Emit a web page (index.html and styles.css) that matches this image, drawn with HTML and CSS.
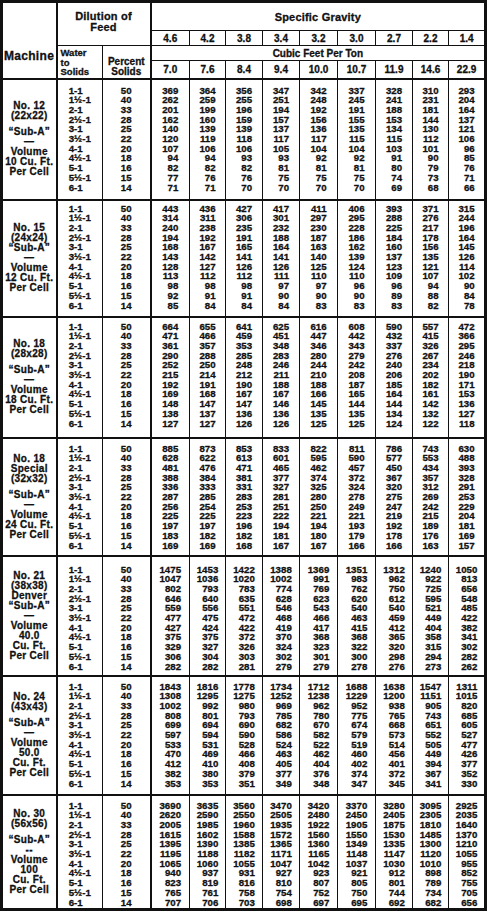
FILE: index.html
```html
<!DOCTYPE html>
<html lang="en">
<head>
<meta charset="utf-8">
<title>Sub-A Cell Capacity Table</title>
<link rel="stylesheet" href="styles.css">
</head>
<body>
<table class="t">
<colgroup>
<col class="c-m"><col class="c-w"><col class="c-p">
<col class="c1"><col class="c2"><col class="c3"><col class="c4"><col class="c5"><col class="c6"><col class="c7"><col class="c8"><col class="c9">
</colgroup>
<thead>
<tr class="h1">
<th rowspan="4" class="mach">Machine</th>
<th colspan="2" rowspan="2" class="dil">Dilution of<br>Feed</th>
<th colspan="9" class="sg">Specific Gravity</th>
</tr>
<tr class="h2">
<th class="n">4.6</th><th class="n">4.2</th><th class="n">3.8</th><th class="n">3.4</th><th class="n">3.2</th><th class="n">3.0</th><th class="n">2.7</th><th class="n">2.2</th><th class="n">1.4</th>
</tr>
<tr class="h3">
<th rowspan="2" class="wts">Water<br>to<br>Solids</th>
<th rowspan="2" class="ps">Percent<br>Solids</th>
<th colspan="9" class="cf">Cubic Feet Per Ton</th>
</tr>
<tr class="h4">
<th class="n">7.0</th><th class="n">7.6</th><th class="n">8.4</th><th class="n">9.4</th><th class="n">10.0</th><th class="n">10.7</th><th class="n">11.9</th><th class="n">14.6</th><th class="n">22.9</th>
</tr>
</thead>
<tbody>
<tr class="sec s1">
<td class="m"><div>No. 12</div><div>(22x22)</div><div class="gap">“Sub-A”</div><div>—</div><div>Volume</div><div>10 Cu. Ft.</div><div>Per Cell</div></td>
<td class="w d"><div class="st">1-1<br>1½-1<br>2-1<br>2½-1<br>3-1<br>3½-1<br>4-1<br>4½-1<br>5-1<br>5½-1<br>6-1</div></td>
<td class="p d"><div class="st">50<br>40<br>33<br>28<br>25<br>22<br>20<br>18<br>16<br>15<br>14</div></td>
<td class="v d"><div class="st">369<br>262<br>201<br>162<br>140<br>120<br>107<br>94<br>82<br>77<br>71</div></td>
<td class="v d"><div class="st">364<br>259<br>199<br>160<br>139<br>119<br>106<br>94<br>82<br>76<br>71</div></td>
<td class="v d"><div class="st">356<br>255<br>196<br>159<br>139<br>118<br>106<br>93<br>82<br>76<br>70</div></td>
<td class="v d"><div class="st">347<br>251<br>194<br>157<br>137<br>117<br>105<br>93<br>81<br>75<br>70</div></td>
<td class="v d"><div class="st">342<br>248<br>192<br>156<br>136<br>117<br>104<br>92<br>81<br>75<br>70</div></td>
<td class="v d"><div class="st">337<br>245<br>191<br>155<br>135<br>115<br>104<br>92<br>81<br>75<br>70</div></td>
<td class="v d"><div class="st">328<br>241<br>188<br>153<br>134<br>115<br>103<br>91<br>80<br>74<br>69</div></td>
<td class="v d"><div class="st">310<br>231<br>181<br>144<br>130<br>112<br>101<br>90<br>79<br>73<br>68</div></td>
<td class="v d"><div class="st">293<br>204<br>164<br>137<br>121<br>106<br>96<br>85<br>76<br>71<br>66</div></td>
</tr>
<tr class="sec s2">
<td class="m"><div>No. 15</div><div>(24x24)</div><div>“Sub-A”</div><div>—</div><div>Volume</div><div>12 Cu. Ft.</div><div>Per Cell</div></td>
<td class="w d"><div class="st">1-1<br>1½-1<br>2-1<br>2½-1<br>3-1<br>3½-1<br>4-1<br>4½-1<br>5-1<br>5½-1<br>6-1</div></td>
<td class="p d"><div class="st">50<br>40<br>33<br>28<br>25<br>22<br>20<br>18<br>16<br>15<br>14</div></td>
<td class="v d"><div class="st">443<br>314<br>240<br>194<br>168<br>143<br>128<br>113<br>98<br>92<br>85</div></td>
<td class="v d"><div class="st">436<br>311<br>238<br>192<br>167<br>142<br>127<br>112<br>98<br>91<br>84</div></td>
<td class="v d"><div class="st">427<br>306<br>235<br>191<br>165<br>141<br>126<br>112<br>98<br>91<br>84</div></td>
<td class="v d"><div class="st">417<br>301<br>232<br>188<br>164<br>141<br>126<br>111<br>97<br>90<br>84</div></td>
<td class="v d"><div class="st">411<br>297<br>230<br>187<br>163<br>140<br>125<br>110<br>97<br>90<br>83</div></td>
<td class="v d"><div class="st">406<br>295<br>228<br>186<br>162<br>139<br>124<br>110<br>96<br>90<br>83</div></td>
<td class="v d"><div class="st">393<br>288<br>225<br>184<br>160<br>137<br>123<br>109<br>96<br>89<br>83</div></td>
<td class="v d"><div class="st">371<br>276<br>217<br>178<br>156<br>135<br>121<br>107<br>94<br>88<br>82</div></td>
<td class="v d"><div class="st">315<br>244<br>196<br>164<br>145<br>126<br>114<br>102<br>90<br>84<br>78</div></td>
</tr>
<tr class="sec s3">
<td class="m"><div>No. 18</div><div>(28x28)</div><div class="gap">“Sub-A”</div><div>—</div><div>Volume</div><div>18 Cu. Ft.</div><div>Per Cell</div></td>
<td class="w d"><div class="st">1-1<br>1½-1<br>2-1<br>2½-1<br>3-1<br>3½-1<br>4-1<br>4½-1<br>5-1<br>5½-1<br>6-1</div></td>
<td class="p d"><div class="st">50<br>40<br>33<br>28<br>25<br>22<br>20<br>18<br>16<br>15<br>14</div></td>
<td class="v d"><div class="st">664<br>471<br>361<br>290<br>252<br>215<br>192<br>169<br>148<br>138<br>127</div></td>
<td class="v d"><div class="st">655<br>466<br>357<br>288<br>250<br>214<br>191<br>168<br>147<br>137<br>127</div></td>
<td class="v d"><div class="st">641<br>459<br>353<br>285<br>248<br>212<br>190<br>167<br>147<br>136<br>126</div></td>
<td class="v d"><div class="st">625<br>451<br>348<br>283<br>246<br>211<br>188<br>167<br>146<br>136<br>126</div></td>
<td class="v d"><div class="st">616<br>447<br>346<br>280<br>244<br>210<br>188<br>166<br>145<br>135<br>125</div></td>
<td class="v d"><div class="st">608<br>442<br>343<br>279<br>242<br>208<br>187<br>165<br>144<br>135<br>125</div></td>
<td class="v d"><div class="st">590<br>432<br>337<br>276<br>240<br>206<br>185<br>164<br>144<br>134<br>124</div></td>
<td class="v d"><div class="st">557<br>415<br>326<br>267<br>234<br>202<br>182<br>161<br>142<br>132<br>122</div></td>
<td class="v d"><div class="st">472<br>366<br>295<br>246<br>218<br>190<br>171<br>153<br>136<br>127<br>118</div></td>
</tr>
<tr class="sec s4">
<td class="m"><div>No. 18</div><div>Special</div><div>(32x32)</div><div class="gap">“Sub-A”</div><div>—</div><div>Volume</div><div>24 Cu. Ft.</div><div>Per Cell</div></td>
<td class="w d"><div class="st">1-1<br>1½-1<br>2-1<br>2½-1<br>3-1<br>3½-1<br>4-1<br>4½-1<br>5-1<br>5½-1<br>6-1</div></td>
<td class="p d"><div class="st">50<br>40<br>33<br>28<br>25<br>22<br>20<br>18<br>16<br>15<br>14</div></td>
<td class="v d"><div class="st">885<br>628<br>481<br>388<br>336<br>287<br>256<br>225<br>197<br>183<br>169</div></td>
<td class="v d"><div class="st">873<br>622<br>476<br>384<br>333<br>285<br>254<br>225<br>197<br>182<br>169</div></td>
<td class="v d"><div class="st">853<br>613<br>471<br>381<br>331<br>283<br>253<br>223<br>196<br>182<br>168</div></td>
<td class="v d"><div class="st">833<br>601<br>465<br>377<br>327<br>281<br>251<br>222<br>194<br>181<br>167</div></td>
<td class="v d"><div class="st">822<br>595<br>462<br>374<br>325<br>280<br>250<br>221<br>194<br>180<br>167</div></td>
<td class="v d"><div class="st">811<br>590<br>457<br>372<br>324<br>278<br>249<br>221<br>193<br>179<br>166</div></td>
<td class="v d"><div class="st">786<br>577<br>450<br>367<br>320<br>275<br>247<br>219<br>192<br>178<br>166</div></td>
<td class="v d"><div class="st">743<br>553<br>434<br>357<br>312<br>269<br>242<br>215<br>189<br>176<br>163</div></td>
<td class="v d"><div class="st">630<br>488<br>393<br>328<br>291<br>253<br>229<br>204<br>181<br>169<br>157</div></td>
</tr>
<tr class="sec s5">
<td class="m"><div>No. 21</div><div>(38x38)</div><div>Denver</div><div>“Sub-A”</div><div>—</div><div>Volume</div><div>40.0</div><div>Cu. Ft.</div><div>Per Cell</div></td>
<td class="w d"><div class="st">1-1<br>1½-1<br>2-1<br>2½-1<br>3-1<br>3½-1<br>4-1<br>4½-1<br>5-1<br>5½-1<br>6-1</div></td>
<td class="p d"><div class="st">50<br>40<br>33<br>28<br>25<br>22<br>20<br>18<br>16<br>15<br>14</div></td>
<td class="v d"><div class="st">1475<br>1047<br>802<br>646<br>559<br>477<br>427<br>375<br>329<br>306<br>282</div></td>
<td class="v d"><div class="st">1453<br>1036<br>793<br>640<br>556<br>475<br>424<br>375<br>327<br>304<br>282</div></td>
<td class="v d"><div class="st">1422<br>1020<br>783<br>635<br>551<br>472<br>422<br>372<br>326<br>303<br>281</div></td>
<td class="v d"><div class="st">1388<br>1002<br>774<br>628<br>546<br>468<br>419<br>370<br>324<br>302<br>279</div></td>
<td class="v d"><div class="st">1369<br>991<br>769<br>623<br>543<br>466<br>417<br>368<br>323<br>301<br>279</div></td>
<td class="v d"><div class="st">1351<br>983<br>762<br>620<br>540<br>463<br>415<br>368<br>322<br>300<br>278</div></td>
<td class="v d"><div class="st">1312<br>962<br>750<br>612<br>540<br>459<br>412<br>365<br>320<br>298<br>276</div></td>
<td class="v d"><div class="st">1240<br>922<br>725<br>595<br>521<br>449<br>404<br>358<br>315<br>294<br>273</div></td>
<td class="v d"><div class="st">1050<br>813<br>656<br>548<br>485<br>422<br>382<br>341<br>302<br>282<br>262</div></td>
</tr>
<tr class="sec s6">
<td class="m"><div>No. 24</div><div>(43x43)</div><div class="gap">“Sub-A”</div><div>—</div><div>Volume</div><div>50.0</div><div>Cu. Ft.</div><div>Per Cell</div></td>
<td class="w d"><div class="st">1-1<br>1½-1<br>2-1<br>2½-1<br>3-1<br>3½-1<br>4-1<br>4½-1<br>5-1<br>5½-1<br>6-1</div></td>
<td class="p d"><div class="st">50<br>40<br>33<br>28<br>25<br>22<br>20<br>18<br>16<br>15<br>14</div></td>
<td class="v d"><div class="st">1843<br>1308<br>1002<br>808<br>699<br>597<br>533<br>470<br>412<br>382<br>353</div></td>
<td class="v d"><div class="st">1816<br>1295<br>992<br>801<br>694<br>594<br>531<br>469<br>410<br>380<br>353</div></td>
<td class="v d"><div class="st">1778<br>1275<br>980<br>793<br>690<br>590<br>528<br>466<br>408<br>379<br>351</div></td>
<td class="v d"><div class="st">1734<br>1252<br>969<br>785<br>682<br>586<br>524<br>463<br>405<br>377<br>349</div></td>
<td class="v d"><div class="st">1712<br>1238<br>962<br>780<br>670<br>582<br>522<br>462<br>404<br>376<br>348</div></td>
<td class="v d"><div class="st">1688<br>1229<br>952<br>775<br>674<br>579<br>519<br>460<br>402<br>374<br>347</div></td>
<td class="v d"><div class="st">1638<br>1200<br>938<br>765<br>668<br>573<br>514<br>456<br>401<br>372<br>345</div></td>
<td class="v d"><div class="st">1547<br>1151<br>905<br>743<br>651<br>552<br>505<br>449<br>394<br>367<br>341</div></td>
<td class="v d"><div class="st">1311<br>1015<br>820<br>685<br>605<br>527<br>477<br>426<br>377<br>352<br>330</div></td>
</tr>
<tr class="sec s7">
<td class="m"><div>No. 30</div><div>(56x56)</div><div class="gap">“Sub-A”</div><div>--</div><div>Volume</div><div>100</div><div>Cu. Ft.</div><div>Per Cell</div></td>
<td class="w d"><div class="st">1-1<br>1½-1<br>2-1<br>2½-1<br>3-1<br>3½-1<br>4-1<br>4½-1<br>5-1<br>5½-1<br>6-1</div></td>
<td class="p d"><div class="st">50<br>40<br>33<br>28<br>25<br>22<br>20<br>18<br>16<br>15<br>14</div></td>
<td class="v d"><div class="st">3690<br>2620<br>2005<br>1615<br>1395<br>1195<br>1065<br>940<br>823<br>765<br>707</div></td>
<td class="v d"><div class="st">3635<br>2590<br>1985<br>1602<br>1390<br>1188<br>1060<br>937<br>819<br>761<br>706</div></td>
<td class="v d"><div class="st">3560<br>2550<br>1960<br>1588<br>1385<br>1182<br>1055<br>931<br>816<br>758<br>703</div></td>
<td class="v d"><div class="st">3470<br>2505<br>1935<br>1572<br>1365<br>1171<br>1047<br>927<br>810<br>754<br>698</div></td>
<td class="v d"><div class="st">3420<br>2480<br>1922<br>1560<br>1360<br>1165<br>1042<br>923<br>807<br>752<br>697</div></td>
<td class="v d"><div class="st">3370<br>2450<br>1905<br>1550<br>1349<br>1148<br>1037<br>921<br>805<br>750<br>695</div></td>
<td class="v d"><div class="st">3280<br>2405<br>1875<br>1530<br>1335<br>1147<br>1030<br>912<br>801<br>744<br>692</div></td>
<td class="v d"><div class="st">3095<br>2305<br>1810<br>1485<br>1300<br>1120<br>1010<br>898<br>789<br>734<br>682</div></td>
<td class="v d"><div class="st">2925<br>2035<br>1640<br>1370<br>1210<br>1055<br>955<br>852<br>755<br>705<br>656</div></td>
</tr>
</tbody>
</table>
</body>
</html>
```

FILE: styles.css
```css
html, body {
  margin: 0;
  padding: 0;
  background: #ffffff;
}

.t {
  border-collapse: collapse;
  table-layout: fixed;
  width: 484px;
  border: 3px solid #111;
  font-family: "Liberation Sans", Arial, sans-serif;
  font-weight: bold;
  color: #111;
  -webkit-text-stroke: 0.3px #111;
}

.c-m { width: 55px; }
.c-w { width: 46px; }
.c-p { width: 48px; }
.c1 { width: 39px; }
.c2 { width: 36px; }
.c3 { width: 37px; }
.c4 { width: 37px; }
.c5 { width: 38px; }
.c6 { width: 38px; }
.c7 { width: 37px; }
.c8 { width: 36px; }
.c9 { width: 37px; }

th, td {
  padding: 0;
  border: 0;
  font-weight: bold;
}

/* header */
.h1 { height: 29px; }
.h2 { height: 15px; }
.h3 { height: 15px; }
.h4 { height: 18px; }

.mach {
  border-right: 2px solid #111;
  vertical-align: top;
  text-align: left;
  padding-top: 47px;
  padding-left: 1px;
  font-size: 12px;
  line-height: 12px;
  letter-spacing: 0.3px;
}

.dil {
  border-right: 2px solid #111;
  border-bottom: 1px solid #111;
  text-align: center;
  vertical-align: middle;
  font-size: 11px;
  line-height: 11.5px;
  letter-spacing: 0.2px;
  padding-bottom: 4px;
}

.sg {
  border-bottom: 1px solid #111;
  text-align: center;
  font-size: 11px;
  letter-spacing: 0.2px;
  padding-top: 1px;
}

.cf {
  border-bottom: 1px solid #111;
  text-align: center;
  font-size: 10px;
}

.n {
  border-left: 1px solid #111;
  text-align: center;
  font-size: 10px;
}

.h2 .n { border-bottom: 1px solid #111; }
.h4 .n { border-bottom: 2px solid #111; }

.wts {
  border-right: 1px solid #111;
  border-bottom: 2px solid #111;
  vertical-align: bottom;
  text-align: left;
  padding-left: 3px;
  padding-bottom: 1px;
  font-size: 9.5px;
  line-height: 9.5px;
}

.ps {
  border-right: 2px solid #111;
  border-bottom: 2px solid #111;
  vertical-align: bottom;
  text-align: center;
  padding-bottom: 1px;
  font-size: 10px;
  line-height: 10px;
}

/* body */
.sec td {
  border-top: 2px solid #111;
  border-left: 1px solid #111;
}

.sec .m {
  border-right: 2px solid #111;
  text-align: center;
  vertical-align: middle;
  font-size: 10px;
  line-height: 10px;
  letter-spacing: 0.3px;
}

.m .gap { margin-top: 6px; }

.sec .p { border-right: 2px solid #111; }

.d {
  vertical-align: top;
  text-align: center;
  font-size: 9.7px;
  line-height: 9.7px;
}

.st {
  display: inline-block;
  text-align: right;
}

.w .st { text-align: left; }
.p .st { text-align: center; }

.s1 { height: 121px; }
.s2 { height: 117px; }
.s3 { height: 121px; }
.s4 { height: 118px; }
.s5 { height: 120px; }
.s6 { height: 119px; }
.s7 { height: 115px; }

.s1 .d { padding-top: 6px; }
.s2 .d { padding-top: 3px; }
.s3 .d { padding-top: 4px; }
.s4 .d { padding-top: 5px; }
.s5 .d { padding-top: 8px; }
.s6 .d { padding-top: 5px; }
.s7 .d { padding-top: 5px; }
```
